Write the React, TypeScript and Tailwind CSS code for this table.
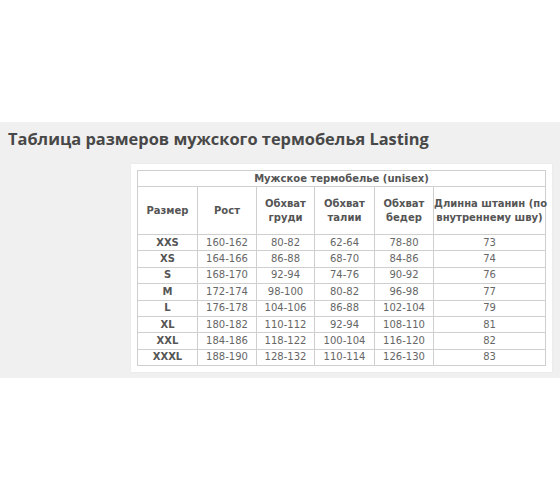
const rows: [string, string, string, string, string, string][] = [
  ["XXS", "160-162", "80-82", "62-64", "78-80", "73"],
  ["XS", "164-166", "86-88", "68-70", "84-86", "74"],
  ["S", "168-170", "92-94", "74-76", "90-92", "76"],
  ["M", "172-174", "98-100", "80-82", "96-98", "77"],
  ["L", "176-178", "104-106", "86-88", "102-104", "79"],
  ["XL", "180-182", "110-112", "92-94", "108-110", "81"],
  ["XXL", "184-186", "118-122", "100-104", "116-120", "82"],
  ["XXXL", "188-190", "128-132", "110-114", "126-130", "83"],
];

const cell = "border border-[#cfcfcf] text-center align-middle p-0";

export default function App() {
  return (
    <div className="w-[560px] h-[504px] bg-white pt-[122px]">
      <section className="bg-[#f0f0f0] pt-[5px] pb-[6px]">
        <h2 className="pl-[8px] text-[16.4px] leading-[24px] font-bold text-[#484848] [font-family:'Open_Sans',sans-serif]">
          Таблица размеров мужского термобелья Lasting
        </h2>
        <div className="mt-[13px] ml-[131px] w-[421px] bg-white p-[6px] shadow-[0_0_2px_rgba(0,0,0,0.06)]">
          <table className="w-[409px] table-fixed border-collapse text-[10px] text-[#666] [font-family:'DejaVu_Sans',Verdana,sans-serif]">
            <colgroup>
              <col className="w-[60px]" />
              <col className="w-[59px]" />
              <col className="w-[58px]" />
              <col className="w-[60px]" />
              <col className="w-[59px]" />
              <col />
            </colgroup>
            <tbody>
              <tr className="h-[16px]">
                <td colSpan={6} className={`${cell} font-bold text-[#555]`}>
                  Мужское термобелье (unisex)
                </td>
              </tr>
              <tr className="h-[48px] font-bold text-[#555] leading-[14px]">
                <td className={cell}>Размер</td>
                <td className={cell}>Рост</td>
                <td className={cell}>
                  Обхват
                  <br />
                  груди
                </td>
                <td className={cell}>
                  Обхват
                  <br />
                  талии
                </td>
                <td className={cell}>
                  Обхват
                  <br />
                  бедер
                </td>
                <td className={`${cell} whitespace-nowrap`}>
                  Длинна штанин (по
                  <br />
                  внутреннему шву)
                </td>
              </tr>
              {rows.map((r) => (
                <tr key={r[0]} className="h-[16.4px] leading-[14px]">
                  <td className={`${cell} font-bold text-[#555]`}>{r[0]}</td>
                  <td className={cell}>{r[1]}</td>
                  <td className={cell}>{r[2]}</td>
                  <td className={cell}>{r[3]}</td>
                  <td className={cell}>{r[4]}</td>
                  <td className={cell}>{r[5]}</td>
                </tr>
              ))}
            </tbody>
          </table>
        </div>
      </section>
    </div>
  );
}
